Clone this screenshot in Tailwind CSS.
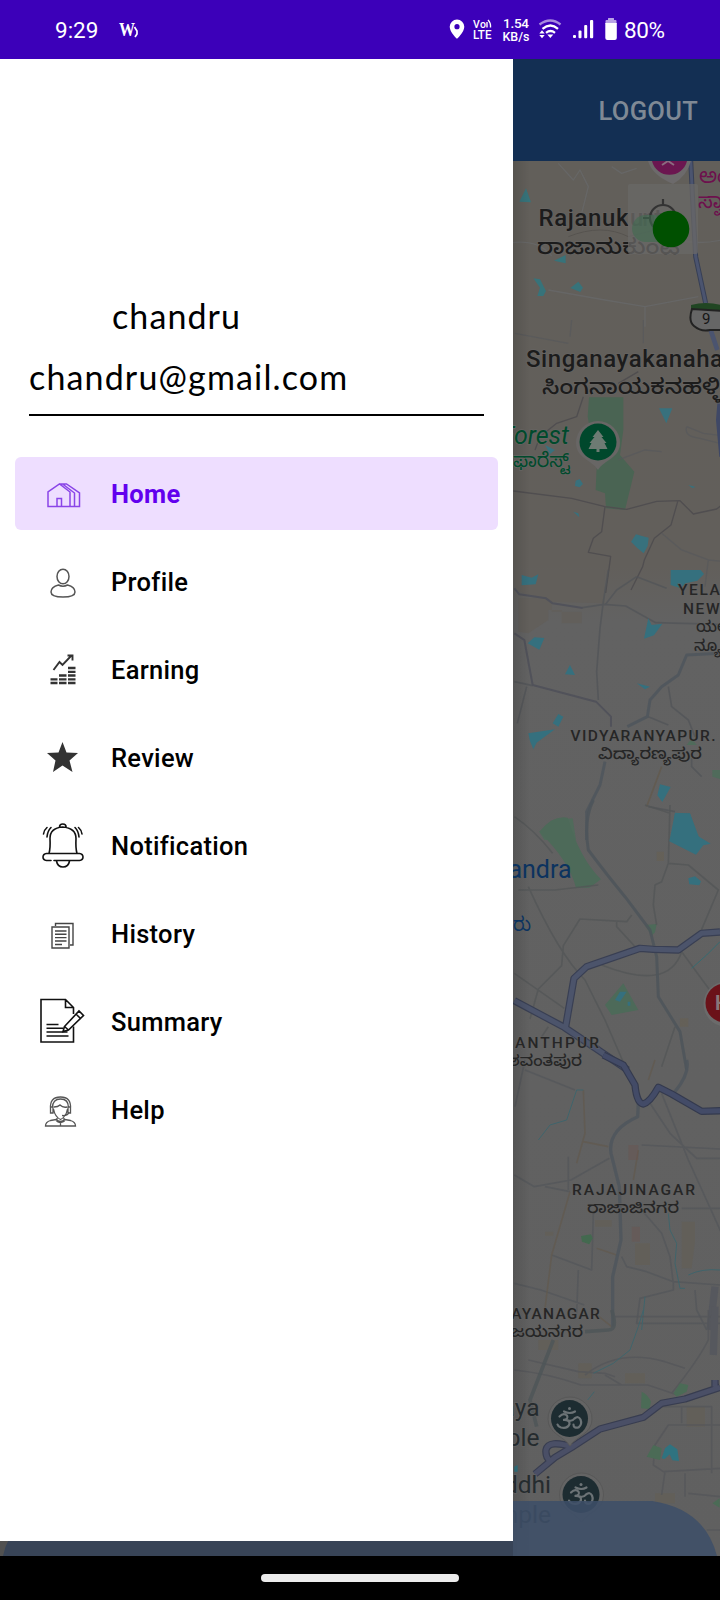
<!DOCTYPE html>
<html lang="en">
<head>
<meta charset="utf-8">
<title>Home</title>
<script src="https://cdn.jsdelivr.net/npm/@tailwindcss/browser@4"></script>
</head>
<body class="bg-black">
<div class="relative flex h-[1600px] w-[720px] flex-col overflow-hidden font-['Roboto','Noto_Sans',sans-serif]">

  <!-- status bar -->
  <header class="flex h-[59px] shrink-0 items-center bg-[#3c00b9] pl-[55px] text-white">
    <span class="w-[63px] pt-[2px] text-[22.5px] leading-none">9:29</span>
    <svg class="h-6 w-6" viewBox="0 0 24 24"><text x="1" y="18" font-family="Liberation Serif" font-weight="700" font-size="19" fill="#fff" textLength="16" lengthAdjust="spacingAndGlyphs">W</text><path d="M16.500 9l2.500 4v3l-2 3" fill="none" stroke="#fff" stroke-width="1.700"/></svg>
    <svg class="ml-auto h-[59px] w-[278px]" viewBox="442 0 278 59" fill="#fff">
      <path fill-rule="evenodd" d="M457 19.500a7.300 7.300 0 0 0-7.300 7.300c0 5.400 7.300 12 7.300 12s7.300-6.600 7.300-12a7.300 7.300 0 0 0-7.300-7.300zm0 4.600a2.600 2.600 0 1 1 0 5.200 2.600 2.600 0 0 1 0-5.200z"/>
      <g font-family="Roboto" font-weight="500">
        <text x="473" y="27.500" font-size="10.500" textLength="13">Vo</text>
        <text x="473" y="38.500" font-size="12" textLength="18.500" lengthAdjust="spacingAndGlyphs">LTE</text>
        <text x="503" y="27.500" font-size="13.500" textLength="26">1.54</text>
        <text x="502.500" y="41" font-size="13.500" textLength="27" lengthAdjust="spacingAndGlyphs">KB/s</text>
      </g>
      <path d="M487 27.500v-5.500M488 20q3 3 2.500 7.500" fill="none" stroke="#fff" stroke-width="1.400"/>
      <g fill="none" stroke="#fff" stroke-width="2.300">
        <path d="M539.500 24.500q11-8 21 0" stroke="#a78ade"/>
        <path d="M542.500 28.800q8-6.500 15.500 0M546 32.800q4.500-3.500 9 0"/>
      </g>
      <path d="M550.300 38l-3-3.500h6z M539.300 33.600l2.700-3.300 2.700 3.300zM539.300 35l2.700 3.300 2.700-3.300z"/>
      <rect x="573" y="35" width="3" height="3" rx="1"/><rect x="578.500" y="30.500" width="3" height="7.800" rx="1"/><rect x="584.200" y="25" width="3" height="13.300" rx="1"/><rect x="590" y="20" width="3.200" height="18.300" rx="1"/>
      <path d="M605.500 24v-3q0-1 1-1h1.500v-1.500q0-.5.500-.5h5q.5 0 .5.500V20h1.500q1 0 1 1v3z" fill="#b9a3e6"/>
      <path d="M605.300 23h11.500v15q0 2-2 2h-7.500q-2 0-2-2z"/>
      <text x="624" y="38" font-family="Roboto" font-size="22.500" textLength="41">80%</text>
    </svg>
  </header>

  <main class="relative flex h-[1497px] shrink-0 flex-col">
    <!-- toolbar -->
    <div class="flex h-[102px] shrink-0 items-center justify-end bg-[#132f53] pr-[22px] pt-[2px] text-[25.500px] font-medium tracking-[0.300px] text-[#7f8995]">LOGOUT</div>

    <!-- map -->
    <svg class="h-[1395px] w-[720px] shrink-0" viewBox="0 161 720 1395" font-family="Roboto, 'Noto Sans', 'Noto Sans Kannada', sans-serif">
      <defs>
        <linearGradient id="land" x1="0" y1="0" x2="0" y2="1"><stop offset="0" stop-color="#625f5a"/><stop offset=".29" stop-color="#625f5b"/><stop offset=".33" stop-color="#626262"/><stop offset="1" stop-color="#606060"/></linearGradient>
        <linearGradient id="edge" x1="513" x2="530" y1="0" y2="0" gradientUnits="userSpaceOnUse"><stop offset="0" stop-opacity=".12"/><stop offset="1" stop-opacity="0"/></linearGradient>
      </defs>
      <rect y="161" width="720" height="1395" fill="url(#land)"/>

      <!-- Rajanukunte -->
      <g transform="translate(505 50) scale(.33333)" fill="none" stroke-linejoin="round">
        <g stroke="#68696b" stroke-width="4" opacity=".7"><path d="M160 340l45 50 20-30 25 50-20 80M320 350l30 20 45-15M20 578q80-10 120 40M130 720l170 30 120 20 160-30M420 770v60M520 570q60 15 130 0"/></g>
        <path d="M190 560q100-40 180 0l80-20" stroke="#56534f" stroke-width="3"/>
        <path d="M557 330l10 200 5 90 30 140" stroke="#373f55" stroke-width="15"/><path d="M557 330l10 200 5 90 30 140" stroke="#4b546f" stroke-width="9"/>
        <path d="M63 415l15 42-35-2zM182 615v25l-35-8zM85 685l20 3 18 35-8 15H97l8-25zM220 695l14 18-8 13-30-12z" fill="#37737a"/>
      </g>

      <!-- forest -->
      <g transform="translate(505 320) scale(.33333)" fill="none" stroke-linejoin="round">
        <path d="M252 232h103v98l-10 75 43 50-28 115-57-5-3-45-28-10 3-70-27-150z" fill="#4a6453"/>
        <g stroke="#504e50" stroke-width="4"><path d="M25 513l175 22 100 25 65 8 90-24 70-2 40 40 70-15 25-20M300 560l-10 75-25 20-15 42 67 12-15 110M518 545l-20 70-50 40-30 65-5 20-35 70M235 230l-20 60-60 20-50 40-15 40M340 190l60-35"/></g>
        <g stroke="#57585b" stroke-width="4" opacity=".7"><path d="M200 0l-5 50M415 0v70M30 40l160 30M340 420l80-30 50 5M545 320l50 20 80 10M545 320q-10 30 40 35l60 15M470 640l60 50 80 30 50 5M610 720l-10 80"/></g>
        <path d="M617 30l20 60" stroke="#4b546f" stroke-width="14"/><path d="M645 240l-5 60 10 110" stroke="#3f4866" stroke-width="14"/>
        <path d="M462 265h40l-18 45zM378 665l15-22 18 5 20 5-3 25-12 22-20-17zM212 482l12-5 10 15-10 10-14-4zM120 375l30 15-15 12zM205 575l15 5 3 12zM550 495l22 6-10 3zM50 765l30 8 18-12-5 30-38 3z" fill="#38717d"/>
      </g>

      <!-- Yelahanka / Vidyaranyapura -->
      <g transform="translate(505 570) scale(.33333)" fill="none" stroke-linejoin="round">
        <path d="M28 0h270v100l-160-5L28 60zM40 85h100v40l90 0v35h-60v-40H130v30l-60 40-30-5z" fill="#625f5b"/>
        <g stroke="#51525a" stroke-width="6"><path d="M28 55l15 18 80 12 20 15 90 14M28 190l30 20 25 135 190 50 45 45v30"/></g>
        <g stroke="#515458" stroke-width="5" opacity=".75"><path d="M232 113l65-10 65 5 90 50 190 5M310 0l-15 95-10 80-10 130 5 85M395 20l-60 40-35 45M395 20l90 35M28 335l55 12M65 350l-28 110M490 350l10 60 50 40 20 50M590 620l-30-30v-25M430 710l80 15M430 440l60 25"/></g>
        <g stroke="#4d555d" stroke-width="9" opacity=".8"><path d="M645 250l-100 5-25 60-50 35-35 40-8 50-60 30M300 575l-15 70-40 80v85"/></g>
        <path d="M470 590l-45 120" stroke="#625b51" stroke-width="5"/>
        <path d="M103 785l40-35 60-5 10 65h-95zM622 600h25v28l-25-8zM560 505l15 20h-30z" fill="#506b5b"/>
        <path d="M497 0l90 0 10 12-20 20-35 8-15 15-30-10zM50 15l30 8 20-10-8 30-42 3zM430 145l10 20 32-4-25 35-30 10zM68 220l20-18 30 2-15 35zM195 285l15 30-30-2zM395 340l40 10-15 8zM160 432l15 8-15 30-17-10zM70 490l80-12-35 25-20 15-10 20-10-25zM465 643l32 8-25 45-15-20zM510 730h45l30 80h-85z" fill="#35707e"/>
      </g>

      <!-- Jalahalli ring road -->
      <g transform="translate(505 800) scale(.33333)" fill="none" stroke-linejoin="round">
        <path d="M103 95q40-50 85-42 35 120 100 185l-35 25h-40q-20-80-110-168zM300 615l55-65 45 80-80 15zM420 375l35-3-5 25-10 10z" fill="#4d6a59"/>
        <g stroke="#535557" stroke-width="5" opacity=".75"><path d="M28 50q60 40 115 110M40 270l110 0 130-15M70 260q90 200 170 280l60 120 65 150M380 345l-15 20-140-8-50 80-5 60-70 70-25 90M335 365v15l55 60M495 15l-5 175 60 5 90 75-55 130M490 190l-20 55-20 10-5 60 10 60M420 15l75 25M290 495q200 80 240-40l110 150M28 520l150 105M130 680l-20 30M470 800l40-120"/></g>
        <g stroke="#4d555b" stroke-width="9" opacity=".85"><path d="M265 0q-30 60-15 150 60 80 110 140l75 100 20 80 5 120 65 105 20 115"/></g>
        <path d="M645 425l-40 40-45 40" stroke="#356a70" stroke-width="3"/>
        <g stroke="#393f53" stroke-width="22"><path d="M645 396l-55 4-70 50-75-2-40-3-160 55-38 35-25 145M28 602l150 80 90 60 100 68"/></g>
        <g stroke="#4c546b" stroke-width="15"><path d="M645 396l-55 4-70 50-75-2-40-3-160 55-38 35-25 145M28 602l150 80 90 60 100 68"/></g>
        <path d="M510 38l45 3 20 65 42 25-22 5-22 28-80-40zM550 235l20-6 18 15-5 12-30-3zM330 600l15-25 20 0-20 30zM368 605h8v12h-8z" fill="#35707e"/>
        <path d="M455 155h22v28h-22zM525 655h25v25h-25z" fill="#68604f" opacity=".5"/>
      </g>

      <!-- Rajajinagar -->
      <g transform="translate(505 1060) scale(.33333)" fill="none" stroke-linejoin="round">
        <g stroke="#53555a" stroke-width="5" opacity=".7"><path d="M28 345l60 35 110-20 115-65M120 380l75 15M60 30l150 60M28 670l80 20 130 45M190 290v100M410 255l235 12M435 130l60 90 80 75 70 0M410 450l60 70 25 70 10 80M350 590l15 30 60 15 80 30 140 10M505 665v25l-100 25-10 75h250M470 100l80 200 100 220M220 630l-5 130M265 460l-5 170-120-45M530 445l115 0M570 690l5 60 30 60M60 0l-30 140"/></g>
        <g stroke="#615a50" stroke-width="5" opacity=".8"><path d="M235 90l5 130-25 90M235 245l75 15M195 395l-55 190-20 160M275 565l60 20M400 270l-15 90M450 0l-20 60M320 800l-50-40"/></g>
        <path d="M400 130l-2 40q-90 40-80 110l25 100 5 160-25 110v150M545 0q10 40-35 95" stroke="#4f565d" stroke-width="10" opacity=".85"/>
        <path d="M235 90h-20l-30 90-50 15-35 45M490 460l5 50 20 40-5 60 15 75h15M420 710l-10 100M550 645q40-20 95-15" stroke="#3f646b" stroke-width="3"/>
        <path d="M295-15l60 30 35 60q5 55 25 57 20-5 45-50l40 20 90 52 60-2" stroke="#343a4e" stroke-width="22"/><path d="M295-15l60 30 35 60q5 55 25 57 20-5 45-50l40 20 90 52 60-2" stroke="#434b67" stroke-width="15"/>
        <path d="M228 528l30-5 5 12-10 18-22-8z" fill="#43694f"/>
        <path d="M370 255h30v45h-30zM380 500h25v45h-25z" fill="#704f4a" opacity=".3"/>
        <path d="M390 550h45v65h-45zM530 485h40v60l-10 80h-30zM270 480h50v20h-50zM120 515h25v12h-25z" fill="#685d4a" opacity=".3"/>
        <path d="M630 680l-15 130" stroke="#56585e" stroke-width="22"/>
      </g>

      <!-- Vijayanagar and south -->
      <g transform="translate(505 1310) scale(.33333)" fill="none" stroke-linejoin="round">
        <path d="M220 160h40v45h-40zM360 190h60v30h-60zM545 290h55v60h-55zM100 90h60v30h-60zM450 550h60v30h-60z" fill="#685d4a" opacity=".3"/>
        <g stroke="#54565a" stroke-width="5" opacity=".75"><path d="M28 180q100 10 200 45l200 0 90 30M70 150l150 35 80 5 30 10M240 195q100-80 240-40l60 20M610 0v90q-30 60-110 160M300 195l50 30M645 345H490l-40 60-5 60 30 20 170-10M470 290h150v200M530 290v50M480 485l-10 70M540 490v70M550 550l95 10M605 660h40M645 20H330"/></g>
        <path d="M145 90l-70 180 20 80M320 0q20 60-10 60l-70 5" stroke="#4e5558" stroke-width="11" opacity=".8"/>
        <path d="M415 0l-15 50-25 70-50 40-60 30M268 245l-20 25" stroke="#3f646b" stroke-width="3"/>
        <path d="M630-10l-5 145" stroke="#56585e" stroke-width="22"/>
        <path d="M410 245q20 10 28 30l-5 22-25-2zM505 250l20-30 25 5-5 20-30 15zM425 440l20-35 25 10-5 35zM622 580l22-15v28z" fill="#4b6b56"/>
        <path d="M470 445l10-30 15-12 22 15 5 35-20-2-8-18-15 14zM28 470l10-5v20H28z" fill="#2f7380"/>
        <g stroke="#383d50" stroke-width="22"><path d="M645 232l-105 35-70 13-55 42-130 35-85 55-50 30-60 50M205 412q-75-25-82 8-2 22 12 32M630 230v-20"/></g>
        <g stroke="#4a4f66" stroke-width="15"><path d="M645 232l-105 35-70 13-55 42-130 35-85 55-50 30-60 50M205 412q-75-25-82 8-2 22 12 32M630 230v-20"/></g>
      </g>
      <rect x="513" y="161" width="27" height="1395" fill="url(#edge)"/>

      <!-- pins -->
      <path d="M648 161q4 14 25 23 14-8 18-23z" fill="#6c6a6b"/>
      <path d="M652 161a18 18 0 0 0 35 0z" fill="#6b1650"/><path d="M662 165l6-4 6 4" stroke="#8b6b80" stroke-width="2" fill="none"/>
      <path d="M598 421a22 22 0 0 1 22 22c0 15-16 17-22 27-6-10-22-12-22-27a22 22 0 0 1 22-22z" fill="#686665"/>
      <circle cx="598" cy="442" r="18.500" fill="#00482c"/>
      <path d="M598 430l5.500 7h-2l5 6h-2l3 6h-8v3h-3v-3h-8l3-6h-2l5-6h-2z" fill="#6d7b73"/>
      <circle cx="726" cy="1004" r="22.500" fill="#6b6b6b"/><circle cx="725" cy="1003" r="19.500" fill="#6b1219"/>
      <text x="715" y="1010" font-size="20" font-weight="700" fill="#88777a">H</text>
      <g id="om">
        <path d="M570 1397a22 22 0 0 1 22 22c0 15-16 17-22 27-6-10-22-12-22-27a22 22 0 0 1 22-22z" fill="#646464" stroke="#585858"/>
        <circle cx="569.500" cy="1418.500" r="18.500" fill="#1d2c31"/>
        <g fill="none" stroke="#6c7376" stroke-width="2.200" stroke-linecap="round">
          <path d="M559.500 1416.500q4-4 7.500-1 2 4-4 4.500 7-.500 6.500 4-2 5-8.500 3.500-3-1-3.500-3M568.500 1420.500q4 1 6-2 4-3 6 1 2 5-2 8-5 1-5-3M564 1411.500q6 3 11 0"/>
        </g><circle cx="569.500" cy="1408.500" r="1.500" fill="#6c7376"/>
      </g>
      <use href="#om" x="11.500" y="76"/>

      <!-- labels -->
      <g fill="#1c1c1c" font-size="24" font-weight="500" stroke="#666462" stroke-width="1.500" paint-order="stroke">
        <text x="538.500" y="226" textLength="90">Rajanuk</text>
        <text x="630" y="226" textLength="44" fill="#2d2c2b">unte</text>
        <text x="537" y="254" font-size="22" font-weight="500" textLength="143" lengthAdjust="spacingAndGlyphs">ರಾಜಾನುಕುಂಟೆ</text>
        <text x="526" y="367" textLength="197">Singanayakanaha</text>
        <text x="542" y="394" font-size="22" font-weight="500" textLength="181" lengthAdjust="spacingAndGlyphs">ಸಿಂಗನಾಯಕನಹಳ್ಳಿ</text>
      </g>
      <g fill="#004a2c" stroke="#666462" stroke-width="1.500" paint-order="stroke">
        <text x="569" y="444" text-anchor="end" font-size="25" font-style="italic">Forest</text>
        <text x="513" y="467" font-size="20" textLength="57" lengthAdjust="spacingAndGlyphs">ಫಾರೆಸ್ಟ್</text>
      </g>
      <g fill="#6d104d" font-size="21"><text x="699" y="183">ಅಂಚೆ</text><text x="698" y="208">ಸ್ವಾಮಿ</text></g>
      <g fill="#262626" font-size="15.500" font-weight="500" stroke="#626262" stroke-width="1" paint-order="stroke">
        <text x="678" y="594.500" letter-spacing="1.600">YELAHANKA</text>
        <text x="683" y="613.500" letter-spacing="1.600">NEW TOWN</text>
        <text x="696" y="632">ಯಲಹಂಕ</text>
        <text x="694" y="651">ನ್ಯೂಟೌನ್</text>
        <text x="570.500" y="740.500" letter-spacing="1.400">VIDYARANYAPUR.</text>
        <text x="598" y="758.500" textLength="104" lengthAdjust="spacingAndGlyphs">ವಿದ್ಯಾರಣ್ಯಪುರ</text>
        <text x="515" y="1047.500" textLength="84">ANTHPUR</text>
        <text x="509" y="1066" textLength="73" lengthAdjust="spacingAndGlyphs">ಶವಂತಪುರ</text>
        <text x="572" y="1194.500" textLength="123">RAJAJINAGAR</text>
        <text x="587" y="1213" textLength="92" lengthAdjust="spacingAndGlyphs">ರಾಜಾಜಿನಗರ</text>
        <text x="601" y="1318.500" text-anchor="end" letter-spacing="1.200">JAYANAGAR</text>
        <text x="511" y="1337" textLength="72" lengthAdjust="spacingAndGlyphs">ಜಯನಗರ</text>
      </g>
      <g font-size="25" fill="#0c335f"><text x="571.500" y="878" text-anchor="end">Jalandra</text><text x="513" y="931" font-size="20" textLength="18" lengthAdjust="spacingAndGlyphs">ರು</text></g>
      <g font-size="24.500" fill="#252b2e" text-anchor="end" stroke="#606060" stroke-width="1.500" paint-order="stroke"><text x="539.500" y="1416">aya</text><text x="539.500" y="1446">Temple</text><text x="551" y="1493">Siddhi</text><text x="551" y="1523">Temple</text></g>

      <!-- route shield -->
      <path d="M691 305q15-4 30 0v7h-30z" fill="#214623"/><path d="M692 309q-4 12 2 17 7 6 16 4h12v-19z" fill="#666" stroke="#222" stroke-width="2"/>
      <text x="702" y="324" font-size="15" fill="#151515">9</text>

      <!-- my-location button and toggle -->
      <rect x="628" y="184" width="70" height="70" rx="2" fill="#696867" opacity=".75"/>
      <g stroke="#333" stroke-width="2.200" fill="none"><circle cx="663" cy="218" r="13"/><path d="M663 199v6M643 218h7M676 218h7"/></g>
      <rect x="632" y="215" width="52" height="27" rx="13.500" fill="#406b50" opacity=".6"/>
      <circle cx="671" cy="229" r="18.300" fill="#005000"/>

      <!-- bottom panel -->
      <path d="M3 1556q6-36 62-55H652q53 8 65 55z" fill="#3d4e68" fill-opacity=".88"/>
      <path d="M0 1541h513v15H0z" fill="#000" opacity=".15"/>
    </svg>

    <!-- navigation drawer -->
    <aside class="absolute left-0 top-0 flex h-[1482px] w-[513px] flex-col bg-white text-black">
      <div class="mx-[29px] flex h-[357px] flex-col justify-end border-b-2 border-black font-['Lato',sans-serif] text-[34px] leading-[40px]">
        <div class="pl-[83px]"><span class="tracking-[1.100px]">chandru</span></div>
        <div class="mb-[17px] mt-[21px]"><span class="tracking-[1.150px]">chandru@gmail.com</span></div>
      </div>
      <nav class="mx-[15px] mt-[41px] flex flex-col gap-[15px] text-[25.500px] font-medium tracking-[0.300px]">
        <a class="flex h-[73px] items-center rounded-md bg-[#eedeff] pt-[2px] font-bold text-[#6200ee]"><svg class="mx-[23px] h-[50px] w-[50px]" viewBox="0 0 50 50" fill="none" stroke="#8a45e8" stroke-width="1.500"><path d="M10 36.500V22l11.500-8L32 22v14.500zM19 36.500v-8h4.500v8M21.500 14h3L36.500 23v13.500H32M24.500 14h4L41.500 23v13.500h-5"/></svg>Home</a>
        <a class="flex h-[73px] items-center pt-[2px]"><svg class="mx-[23px] h-[50px] w-[50px]" viewBox="0 0 50 50" fill="none" stroke="#555" stroke-width="1.500"><ellipse cx="25" cy="18.500" rx="6" ry="7.300"/><path d="M20.500 27Q13 29 13 34q0 5 12 5t12-5q0-5-7.500-7-4.500 2.500-9 0z"/></svg>Profile</a>
        <a class="flex h-[73px] items-center pt-[2px]"><svg class="mx-[23px] h-[50px] w-[50px]" viewBox="0 1 50 50" fill="none" stroke="#333" stroke-width="1.900"><path d="M15.500 25l6-8 3 3 9-9.500M29.500 10.500h5v5"/><path stroke-width="2.300" d="M12.500 38h7m1.500 0h7.500m1.500 0h7.500M12.500 34.300h7m1.500 0h7.500m1.500 0h7.500M21 30.500h7.500m1.500 0h7.500M30 26.800h7.500M30 23h7.500"/></svg>Earning</a>
        <a class="flex h-[73px] items-center pt-[2px]"><svg class="mx-[23px] h-[50px] w-[50px]" viewBox="0 1 50 50" fill="#333"><path d="M24.500 9l4 10.500L40 20l-8.500 7.500L34.500 39l-10-6.500-9.500 6.500 2.500-11.500L9 20l11.500-.500z"/></svg>Review</a>
        <a class="flex h-[73px] items-center pt-[2px]"><svg class="mx-[23px] h-[50px] w-[50px]" viewBox="0 2 50 50" fill="none" stroke="#111" stroke-width="1.600" stroke-linecap="round"><path d="M11 33.500q1.500-5 1-15Q12 8 24.500 7 38 8 38 18.500q-.500 10 1 15M21.500 7q0-3 3.300-3t3.300 3M13 40.500H8.500q-3.500-.500-3.500-3.500t3.500-3.500h33Q45 34 45 37t-3.500 3.500H16M18.500 41q1 6 6.500 6t6.500-6M9 17q.500-6 4-9.500M5.500 14q.500-4 3.500-6.500M41 17q-.500-6-4-9.500M44 14q-.500-4-3.500-6.500"/></svg>Notification</a>
        <a class="flex h-[73px] items-center pt-[2px]"><svg class="mx-[23px] h-[50px] w-[50px]" viewBox="0 0 50 50" fill="none" stroke="#444" stroke-width="1.400"><path d="M14 17h17v21H14zM17.500 16v-2.500H35V35h-3M17 21h11.500M17 24.300h11.500M17 27.600h11.500M17 31h11.500M17 34.500h7"/></svg>History</a>
        <a class="flex h-[73px] items-center pt-[2px]"><svg class="mx-[23px] h-[50px] w-[50px]" viewBox="0.500 2 50 50" fill="none" stroke="#111" stroke-width="1.600"><path d="M36 30.500V46H3.500V3.500H28l8 8V18M28 3.500v8h8M9 28.500h12M9 32.200h17M9 36h21M9 40h22"/><path fill="#fff" d="M27 30.500L41.500 15l4.500 4.500L31 34l-5.500 1.500zM38.500 18l4.500 4.500M27 30.500l4 3.500"/></svg>Summary</a>
        <a class="flex h-[73px] items-center pt-[2px]"><svg class="mx-[23px] h-[50px] w-[50px]" viewBox="0 -3 50 50" fill="none" stroke="#555" stroke-width="1.300"><path d="M14.500 18.500q0-8.500 8-8.500t8 8.500M12.500 20q-1-12 10-12t10 12M12.500 18h2.500v6h-2.500zM30 18h2.500v6H30zM16 18q4 0 6-2 3 3 7 2M15.500 20q1.500 8 7 10.500 5.500-2.500 7-10.500M31 23q-1 4-7 3.500M19 29v3.500q3 2 7 0V29M7.500 37q0-4 5-5.500l5.500-1q4.500 4 9 0l5.500 1q5 1.500 5 5.500zM22.500 33v4"/></svg>Help</a>
      </nav>
    </aside>
  </main>

  <!-- gesture bar -->
  <footer class="flex h-[44px] shrink-0 items-center justify-center bg-black"><div class="h-2 w-[198px] rounded-full bg-[#ececec]"></div></footer>
</div>
</body>
</html>
